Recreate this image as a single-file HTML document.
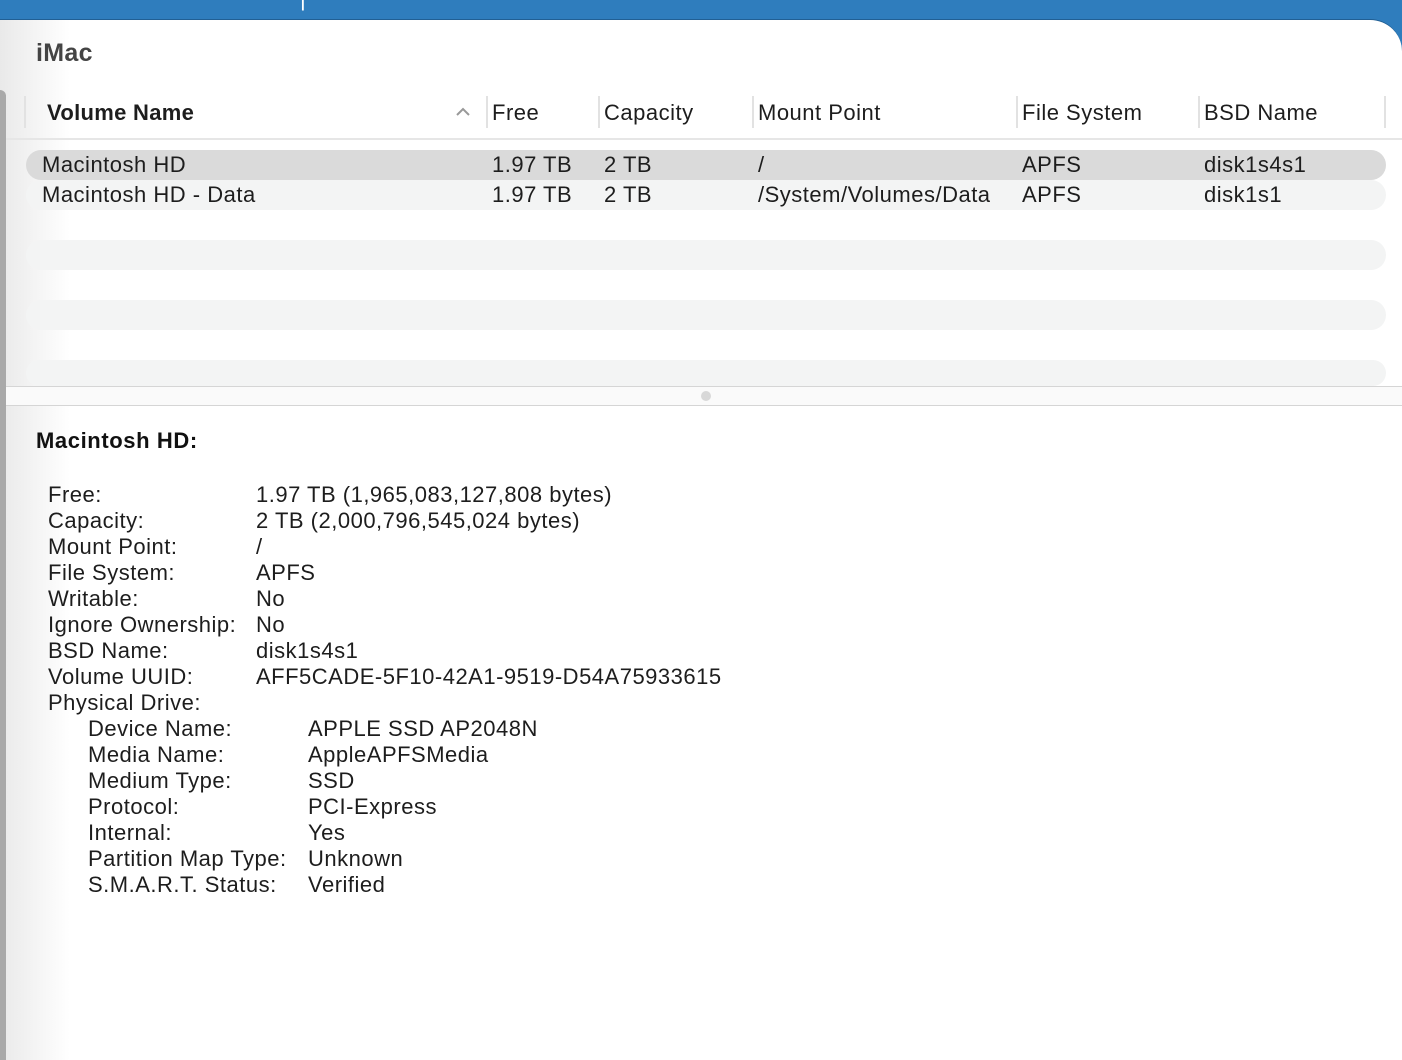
<!DOCTYPE html>
<html><head><meta charset="utf-8"><style>
*{margin:0;padding:0;box-sizing:border-box}
html,body{width:1402px;height:1060px;overflow:hidden}
body{background:#2f7dbd;font-family:"Liberation Sans",Arial,sans-serif;color:#1d1d1d;position:relative}
.win{position:absolute;left:0;top:19px;width:1402px;height:1045px;background:#fff;border-top-right-radius:32px;border-top:1px solid #215f94}
.lg{position:absolute;left:0;top:0;width:70px;height:1045px;background:linear-gradient(90deg,#e9e9e9,#fff)}
.lbar{position:absolute;left:0;top:70px;width:6px;height:975px;background:#a9a9a9;border-top-right-radius:6px}
.t{position:absolute;white-space:nowrap;font-size:22px;line-height:26px;letter-spacing:0.5px}
.sep{position:absolute;top:96px;width:2px;height:32px;background:#e2e2e2}
.row{position:absolute;left:26px;width:1360px;height:30px;border-radius:15px;background:#f3f4f4}
</style></head><body>
<div class="t" style="left:300px;top:-14px;color:#fff">|</div>
<div class="win">
<div class="lg"></div><div class="lbar"></div>
<div class="t" style="left:36px;top:20px;font-weight:bold;font-size:25px;color:#444;letter-spacing:0.3px">iMac</div>
</div>
<div style="position:absolute;left:6px;top:138px;width:1396px;height:2px;background:#e6e6e6"></div>
<div class="sep" style="left:24px"></div>
<div class="sep" style="left:486px"></div>
<div class="sep" style="left:598px"></div>
<div class="sep" style="left:752px"></div>
<div class="sep" style="left:1016px"></div>
<div class="sep" style="left:1198px"></div>
<div class="sep" style="left:1384px"></div>
<div class="t" style="left:47px;top:100px;font-weight:bold;letter-spacing:0.3px">Volume Name</div>
<svg style="position:absolute;left:455px;top:106px" width="16" height="12"><path d="M2 9 L8 3 L14 9" stroke="#999" stroke-width="2" fill="none"/></svg>
<div class="t" style="left:492px;top:100px">Free</div>
<div class="t" style="left:604px;top:100px">Capacity</div>
<div class="t" style="left:758px;top:100px">Mount Point</div>
<div class="t" style="left:1022px;top:100px">File System</div>
<div class="t" style="left:1204px;top:100px">BSD Name</div>
<div class="row" style="top:150px;background:#dadada"></div>
<div class="row" style="top:180px"></div>
<div class="row" style="top:240px"></div>
<div class="row" style="top:300px"></div>
<div class="row" style="top:360px;height:26px"></div>
<div class="t" style="left:42px;top:152px">Macintosh HD</div>
<div class="t" style="left:492px;top:152px">1.97 TB</div>
<div class="t" style="left:604px;top:152px">2 TB</div>
<div class="t" style="left:758px;top:152px">/</div>
<div class="t" style="left:1022px;top:152px">APFS</div>
<div class="t" style="left:1204px;top:152px">disk1s4s1</div>
<div class="t" style="left:42px;top:182px">Macintosh HD - Data</div>
<div class="t" style="left:492px;top:182px">1.97 TB</div>
<div class="t" style="left:604px;top:182px">2 TB</div>
<div class="t" style="left:758px;top:182px">/System/Volumes/Data</div>
<div class="t" style="left:1022px;top:182px">APFS</div>
<div class="t" style="left:1204px;top:182px">disk1s1</div>
<div style="position:absolute;left:6px;top:386px;width:1396px;height:20px;background:#fafafa;border-top:1px solid #d5d5d5;border-bottom:1px solid #d5d5d5"></div>
<div style="position:absolute;left:701px;top:391px;width:10px;height:10px;border-radius:50%;background:#d8d8d8"></div>
<div class="t" style="left:36px;top:428px;font-weight:bold;color:#111;letter-spacing:0.6px">Macintosh HD:</div>
<div class="t" style="left:48px;top:482px">Free:<br>Capacity:<br>Mount Point:<br>File System:<br>Writable:<br>Ignore Ownership:<br>BSD Name:<br>Volume UUID:<br>Physical Drive:</div>
<div class="t" style="left:256px;top:482px">1.97 TB (1,965,083,127,808 bytes)<br>2 TB (2,000,796,545,024 bytes)<br>/<br>APFS<br>No<br>No<br>disk1s4s1<br>AFF5CADE-5F10-42A1-9519-D54A75933615</div>
<div class="t" style="left:88px;top:716px">Device Name:<br>Media Name:<br>Medium Type:<br>Protocol:<br>Internal:<br>Partition Map Type:<br>S.M.A.R.T. Status:</div>
<div class="t" style="left:308px;top:716px">APPLE SSD AP2048N<br>AppleAPFSMedia<br>SSD<br>PCI-Express<br>Yes<br>Unknown<br>Verified</div>
</body></html>
